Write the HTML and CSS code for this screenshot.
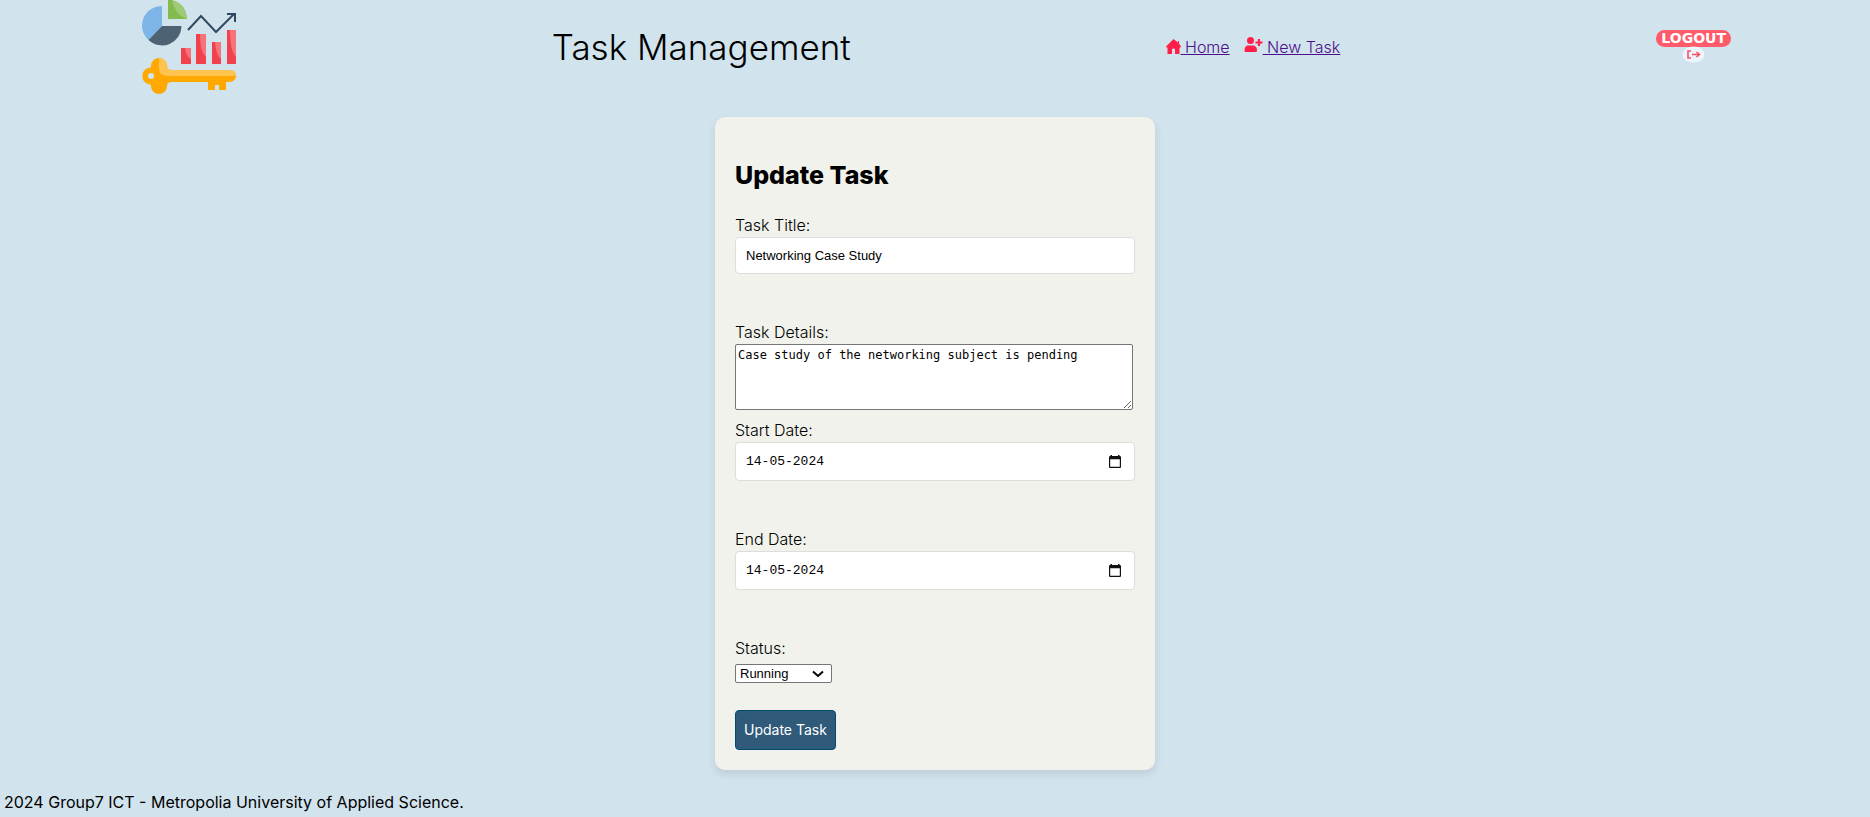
FILE: index.html
```html
<!DOCTYPE html>
<html lang="en">
<head>
<meta charset="utf-8">
<title>Task Management</title>
<link rel="stylesheet" href="styles.css">
</head>
<body>
<header class="header">
  <svg class="logo" viewBox="0 0 100 97" aria-hidden="true">
    <path fill="#7db5e8" d="M23 6A19.500 19.500 0 0 0 9.500 40L23 26Z"/>
    <path fill="#4d6272" d="M23 26H42.500A19.500 19.500 0 0 1 9.500 40Z"/>
    <path fill="#83bb4f" d="M29 0H33Q47 4 48 19H29Z"/>
    <path fill="#9fca77" d="M33 0Q47 4 48 19Q36 15 33 0Z"/>
    <path fill="none" stroke="#2f4a5e" stroke-width="2" d="M49 30L62 16L77 32L95 14M88 14H96V22"/>
    <path fill="#f0414c" d="M42 48h10v16H42zM57 34h10v30H57zM73 42h9v22h-9zM88 30h9v34h-9z"/>
    <path fill="#f6737c" d="M46 48h6v11q-5-3-6-11zM61 34h6v23q-6-5-6-23zM76 42h6v17q-5-4-6-17zM91 30h6v27q-6-6-6-27z"/>
    <path fill="#ffa800" fill-rule="evenodd" d="M20 58a8 8 0 0 1 8 8q0 4 5 4H91a6 6 0 0 1 0 12H87V90H80V85H76V90H69V82H33q-5 0-5 4a8 8 0 0 1-16 0q0-2-3-2a8.500 8.500 0 0 1 0-16q3 0 3-2a8 8 0 0 1 8-8zM12 73a3 3 0 1 0 0 6a3 3 0 0 0 0-6z"/>
    <path fill="#ffc34f" d="M20 58a8 8 0 0 1 8 8q0 4 5 4H91a6 6 0 0 1 6 6H29q-9 0-9-8z"/>
  </svg>
  <h1 class="brand">Task Management</h1>
  <nav class="nav">
    <a class="nav-link" href="#"><svg class="nav-icon" width="15" height="15" viewBox="0 0 15 15" aria-hidden="true"><path fill="#ff1f48" d="M7.500 0L12 3.500V2H13V4.500L15 7.500L14.500 8.500H13.500V15H9V10.500Q9 9.500 7.500 9.500T6 10.500V15H1.500V8.500H.5L0 7.500Z"/></svg> Home</a>
    <a class="nav-link" href="#"><svg class="nav-icon nav-icon-raised" width="19" height="15" viewBox="0 0 19 15" aria-hidden="true"><circle cx="6.500" cy="3.500" r="3.500" fill="#ff1f48"/><path fill="#ff1f48" d="M4 8.500H9Q13 8.500 13 14Q13 15 12 15H1.500Q.5 15 .5 14Q.5 8.500 4 8.500Z"/><path stroke="#ff1f48" stroke-width="2.200" d="M15 2V9M11.500 5.500H18.500"/></svg> New Task</a>
  </nav>
  <button class="logout" type="button"><span class="logout-label">LOGOUT</span><svg class="logout-icon" width="23" height="17" viewBox="0 0 23 17" aria-hidden="true"><ellipse cx="11.500" cy="8.500" rx="11" ry="8" fill="#edf5fc"/><path fill="none" stroke="#fb5262" stroke-width="1.600" d="M9 5H6V12H9M10 8.500H17M14.500 6L17.500 8.500L14.500 11"/></svg></button>
</header>
<main>
  <form class="card">
    <h2 class="card-title">Update Task</h2>
    <div class="group">
      <label class="label" for="title">Task Title:</label>
      <input class="input" id="title" type="text" value="Networking Case Study">
    </div>
    <div class="group group-tight">
      <label class="label" for="details">Task Details:</label>
      <textarea class="textarea" id="details">Case study of the networking subject is pending</textarea>
    </div>
    <div class="group">
      <label class="label" for="start">Start Date:</label>
      <div class="date">
        <input class="date-input" id="start" type="text" value="14-05-2024">
        <button class="date-button" type="button" aria-label="Pick start date"><svg class="calendar" width="12" height="13" viewBox="0 0 12 13"><path fill="#111" fill-rule="evenodd" d="M1.500 0H3V1H9V0H10.500V1Q12 1 12 2V12Q12 13 11 13H1Q0 13 0 12V2Q0 1 1.500 1ZM1.200 4.200V11.800H10.800V4.200Z"/></svg></button>
      </div>
    </div>
    <div class="group">
      <label class="label" for="end">End Date:</label>
      <div class="date">
        <input class="date-input" id="end" type="text" value="14-05-2024">
        <button class="date-button" type="button" aria-label="Pick end date"><svg class="calendar" width="12" height="13" viewBox="0 0 12 13"><path fill="#111" fill-rule="evenodd" d="M1.500 0H3V1H9V0H10.500V1Q12 1 12 2V12Q12 13 11 13H1Q0 13 0 12V2Q0 1 1.500 1ZM1.200 4.200V11.800H10.800V4.200Z"/></svg></button>
      </div>
    </div>
    <div class="group group-status">
      <label class="label" for="status">Status:</label>
      <select class="select" id="status"><option>Running</option><option>Completed</option></select>
    </div>
    <button class="submit" type="submit">Update Task</button>
  </form>
</main>
<footer class="footer">2024 Group7 ICT - Metropolia University of Applied Science.</footer>
</body>
</html>
```
FILE: styles.css
```css
* { box-sizing: border-box; }
body {
  margin: 0;
  background: #d1e3ed;
  color: #000;
  font: 400 16px/24px Inter, sans-serif;
}
.header {
  display: grid;
  grid-template-columns: 20fr 35fr 24fr 21fr;
  align-items: center;
  justify-items: center;
}
.logo { justify-self: start; width: 100px; height: 97px; margin-left: 139px; }
.brand, .nav, .logout { margin-bottom: 4px; }
.brand { margin-top: 0; font-size: 35px; font-weight: 300; line-height: 48px; }
.nav { display: flex; gap: 14px; font-weight: 300; }
.nav-link { color: #4b0f8a; }
.nav-icon { vertical-align: -1px; }
.nav-icon-raised { vertical-align: 1px; }
.logout {
  justify-self: end;
  margin-right: 139px;
  padding: 0;
  border: 0;
  background: none;
  display: flex;
  flex-direction: column;
  align-items: center;
}
.logout-label {
  padding: 0 5px;
  border-radius: 9px;
  background: #fd5b69;
  color: #fff;
  font: bold 14px/17px "DejaVu Sans", sans-serif;
}
.logout-icon { display: block; margin-top: -1px; }
.card {
  width: 440px;
  max-width: 100%;
  margin: 20px auto;
  padding: 20px;
  border-radius: 10px;
  background: #f1f2eb;
  box-shadow: 0 4px 8px rgba(0, 0, 0, 0.1);
}
.card-title { margin: 20px 0; font-size: 25px; font-weight: 800; line-height: 36px; }
.group { margin-bottom: 46px; }
.group-tight { margin-bottom: 8px; }
.group-status { margin-bottom: 27px; }
.label { display: block; font-weight: 300; }
.input, .date {
  width: 100%;
  border: 1px solid #ddd;
  border-radius: 4px;
  background: #fff;
}
.input {
  display: block;
  height: 37px;
  padding: 10px;
  color: #000;
  font: 13px/15px "Liberation Sans", sans-serif;
}
.textarea {
  display: block;
  width: 398px;
  max-width: 100%;
  height: 66px;
  padding: 2px;
  border: 1px solid #767676;
  border-radius: 2px;
  background: #fff;
  color: #000;
  font: 12px/16px "DejaVu Sans Mono", monospace;
}
.date { display: flex; align-items: center; height: 39px; padding: 0 13px 0 10px; }
.date-input {
  flex: 1;
  min-width: 0;
  padding: 0;
  border: 0;
  background: none;
  color: #000;
  font: 13px/18px "Liberation Mono", monospace;
}
.date-button { padding: 0; border: 0; background: none; }
.calendar { display: block; }
.select {
  appearance: none;
  display: block;
  width: 97px;
  height: 19px;
  margin-top: 4px;
  padding: 0 24px 0 4px;
  border: 1px solid #767676;
  border-radius: 2px;
  background: #fff url("data:image/svg+xml,%3Csvg xmlns='http://www.w3.org/2000/svg' width='12' height='8'%3E%3Cpath d='M1 1.500L6 6L11 1.500' fill='none' stroke='%23000' stroke-width='2'/%3E%3C/svg%3E") no-repeat right 7px center;
  color: #000;
  font: 13px/17px "Liberation Sans", sans-serif;
}
.submit {
  display: block;
  height: 40px;
  padding: 0 8px;
  border: 1px solid #014a70;
  border-radius: 4px;
  background: #2f5a7a;
  color: #fff;
  font: 400 14px/20px Inter, sans-serif;
}
.footer { padding: 0 4px; }
```
